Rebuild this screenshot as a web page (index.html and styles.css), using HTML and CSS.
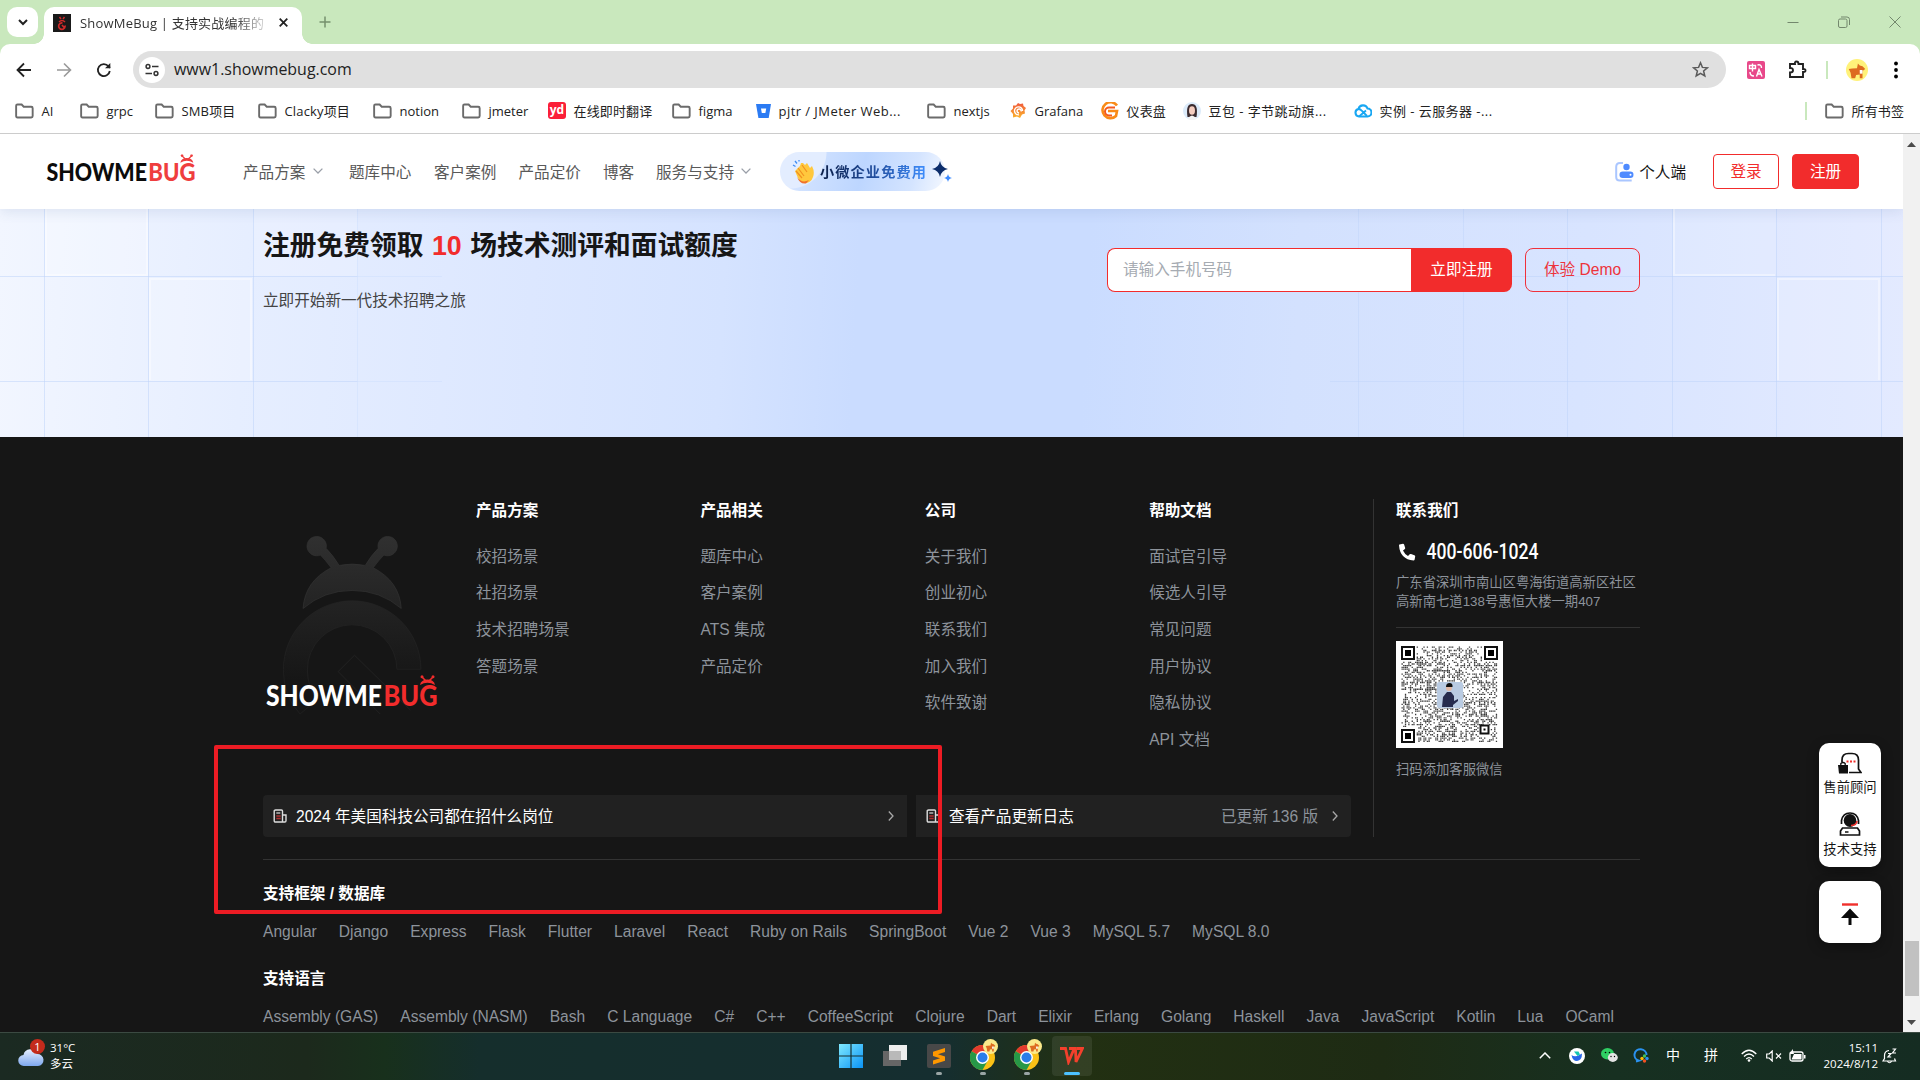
FILE: index.html
```html
<!DOCTYPE html>
<html lang="zh-CN">
<head>
<meta charset="utf-8">
<title>ShowMeBug</title>
<link rel="stylesheet" href="styles.css">
</head>
<body>
<svg class="defs" width="0" height="0" aria-hidden="true">
  <defs>
    <linearGradient id="bugFill" x1="0" y1="0" x2="0" y2="1"><stop offset="0" stop-color="#303030"/><stop offset="1" stop-color="#232323"/></linearGradient>
    <linearGradient id="ringFill" x1="0" y1="0" x2="0" y2="1"><stop offset="0" stop-color="#232323"/><stop offset=".7" stop-color="#161616"/></linearGradient>
    <linearGradient id="cloudFill" x1="0" y1="0" x2="0" y2="1"><stop offset="0" stop-color="#e6efff"/><stop offset="1" stop-color="#7da7ee"/></linearGradient>
    <linearGradient id="winFill" x1="0" y1="0" x2="1" y2="1"><stop offset="0" stop-color="#7fe9ff"/><stop offset="1" stop-color="#0a93f5"/></linearGradient>
    <linearGradient id="graf" x1="0" y1="0" x2="0" y2="1"><stop offset="0" stop-color="#f05a3c"/><stop offset="1" stop-color="#fbb32b"/></linearGradient>
    <symbol id="folder" viewBox="0 0 20 16"><path d="M1.2 2.6Q1.2 1.2 2.6 1.2H7l2.2 2.3h7.9q1.5 0 1.5 1.5v8.3q0 1.5-1.5 1.5H2.6q-1.4 0-1.4-1.5z" fill="none" stroke="#6b6b6b" stroke-width="2"/></symbol>
    <symbol id="down" viewBox="0 0 10 6"><path d="M.6.6 5 5 9.400.6" fill="none" stroke="#9a9fa8" stroke-width="1.3"/></symbol>
    <symbol id="next" viewBox="0 0 6 10"><path d="M.8.5 5 5 .8 9.500" fill="none" stroke="#a8a8a8" stroke-width="1.3"/></symbol>
    <symbol id="doc" viewBox="0 0 15 14"><path d="M2.500 1h6q1 0 1 1v11h-7q-1.300 0-1.300-1.300V2.200Q1.200 1 2.500 1zM9.500 6h3.500v5.800Q13 13 11.800 13H9" fill="none" stroke="#ddd" stroke-width="1.4"/><path d="M3.300 4h4" stroke="#ddd" stroke-width="1.200"/><path d="M3.300 7h4.400M3.300 9.500h4.400" stroke="#b13030" stroke-width="1.500"/></symbol>
    <symbol id="corgi" viewBox="0 0 24 24"><path d="M3 11q3-1 9-1l1-5 2 2 3 1 3 3-3 2v8h-3v-4l-4 .5-1 3.500H6L5 15z" fill="#dd6b20"/><path d="M15 12h3v4h-3z" fill="#fff"/></symbol>
    <symbol id="chrome" viewBox="0 0 24 24"><circle cx="12" cy="12" r="12" fill="#fbc116"/><path d="M12 12 1.600 6A12 12 0 0 1 22.400 6z" fill="#e33b2e"/><path d="M12 12 1.600 6A12 12 0 0 0 12 24l5-9z" fill="#279847"/><path d="M12 6h10.400L17 15z" fill="#fbc116"/><circle cx="12" cy="12" r="6.200" fill="#fff"/><circle cx="12" cy="12" r="4.800" fill="#2b7de9"/></symbol>
    <symbol id="star4" viewBox="0 0 10 10"><path d="M5 0Q5.800 4.200 10 5 5.800 5.800 5 10 4.200 5.800 0 5 4.200 4.200 5 0z"/></symbol>
    <symbol id="head" viewBox="0 0 18 11"><path d="M3.500 2l4 4M14.500 2l-4 4" stroke="currentColor" stroke-width="1.600"/><circle cx="3.500" cy="1.700" r="1.500" fill="currentColor"/><circle cx="14.500" cy="1.700" r="1.500" fill="currentColor"/><path d="M1.500 10Q2.500 4.500 9 4.500t7.500 5.500Q9 5.500 1.500 10z" fill="currentColor"/></symbol>
  </defs>
</svg>

<div class="tabstrip">
  <div class="tab-search"><svg width="10" height="7" viewBox="0 0 10 7"><path d="M1 1l4 4 4-4" fill="none" stroke="#222" stroke-width="2"/></svg></div>
  <div class="tab">
    <svg class="favicon" width="18" height="18" viewBox="0 0 18 18"><rect width="18" height="18" fill="#191919"/><path d="M6.500 3 8 5M11.500 3 10 5M6 8q3-3 6 0" fill="none" stroke="#cf2a2a" stroke-width="1.500"/><path d="M12 11.500A3.200 3.200 0 1 1 9.500 9M9 11l3 3.500" fill="none" stroke="#cf2a2a" stroke-width="1.700"/></svg>
    <span class="tab-title">ShowMeBug | 支持实战编程的</span>
    <svg width="9" height="9" viewBox="0 0 9 9"><path d="M.7.700l7.600 7.600M8.300.700.700 8.300" stroke="#222" stroke-width="1.800"/></svg>
  </div>
  <svg class="tab-add" width="12" height="12" viewBox="0 0 12 12"><path d="M6 .5v11M.5 6h11" stroke="#76906e" stroke-width="1.500"/></svg>
  <div class="win-ctl">
    <svg width="12" height="12" viewBox="0 0 12 12"><path d="M.5 6.500h11" stroke="#73876d"/></svg>
    <svg width="12" height="12" viewBox="0 0 12 12"><rect x=".5" y="3" width="8.500" height="8.500" rx="1.500" fill="none" stroke="#73876d"/><path d="M3 1h6q2.500 0 2.500 2.500V9" fill="none" stroke="#73876d"/></svg>
    <svg width="12" height="12" viewBox="0 0 12 12"><path d="M.5.500l11 11M11.500.500l-11 11" stroke="#73876d"/></svg>
  </div>
</div>

<div class="toolbar-wrap">
<div class="toolbar">
  <svg width="16" height="16" viewBox="0 0 16 16"><path d="M15 8H2M8 1.500 1.500 8 8 14.500" fill="none" stroke="#222" stroke-width="1.800"/></svg>
  <svg width="16" height="16" viewBox="0 0 16 16"><path d="M1 8h13M8 1.500 14.500 8 8 14.500" fill="none" stroke="#999" stroke-width="1.600"/></svg>
  <svg width="16" height="16" viewBox="0 0 16 16"><path d="M13.800 9A6 6 0 1 1 12.500 4.200L14 5.800" fill="none" stroke="#222" stroke-width="1.800"/><path d="M14.300 1v5.300H9z" fill="#222"/></svg>
  <div class="omnibox">
    <span class="site-info"><svg width="14" height="14" viewBox="0 0 14 14"><circle cx="3" cy="3.500" r="1.900" fill="none" stroke="#333" stroke-width="1.500"/><circle cx="11" cy="10.500" r="1.900" fill="none" stroke="#333" stroke-width="1.500"/><path d="M7 3.500h6.500M.500 10.500H7" stroke="#333" stroke-width="1.600"/></svg></span>
    <span class="url">www1.showmebug.com</span>
    <svg class="bm-star" width="17" height="17" viewBox="0 0 17 17"><path d="M8.500 1.800 10.400 6.400 15.400 6.800 11.600 10 12.800 15 8.500 12.300 4.200 15 5.400 10 1.600 6.800 6.600 6.400z" fill="none" stroke="#5a5a5a" stroke-width="1.500"/></svg>
  </div>
  <div class="ext">
    <svg width="18" height="18" viewBox="0 0 18 18"><rect width="18" height="18" rx="2" fill="#e8488a"/><path d="M2.500 4.500h6v3h-6zM5.500 2.500v8M10.500 4q4-1 4 3M3 11q0 4 4 4M9.500 15.500l2.500-7 3 7M10.500 13h3.500" fill="none" stroke="#fff" stroke-width="1.400"/></svg>
    <svg width="19" height="19" viewBox="0 0 19 19"><path d="M2 4h5Q6.500 1.500 8.500 1.500T10.500 4H15v5q2.500-.3 2.500 1.500T15 12v5H2v-4.500Q5 12.500 5 10.200T2 8z" fill="none" stroke="#222" stroke-width="1.900"/></svg>
    <i class="sep"></i>
    <svg width="22" height="22" viewBox="0 0 24 24"><circle cx="12" cy="12" r="12" fill="#fff27a"/><use href="#corgi"/></svg>
    <svg width="4" height="18" viewBox="0 0 4 18"><circle cx="2" cy="2.500" r="1.900"/><circle cx="2" cy="9" r="1.900"/><circle cx="2" cy="15.500" r="1.900"/></svg>
  </div>
</div>

<div class="bookmarks">
  <a><svg class="f"><use href="#folder"/></svg>AI</a>
  <a><svg class="f"><use href="#folder"/></svg>grpc</a>
  <a class="cjk"><svg class="f"><use href="#folder"/></svg>SMB项目</a>
  <a class="cjk"><svg class="f"><use href="#folder"/></svg>Clacky项目</a>
  <a><svg class="f"><use href="#folder"/></svg>notion</a>
  <a><svg class="f"><use href="#folder"/></svg>jmeter</a>
  <a class="cjk"><span class="yd">yd</span>在线即时翻译</a>
  <a><svg class="f"><use href="#folder"/></svg>figma</a>
  <a class="long"><svg width="15" height="14" viewBox="0 0 15 14"><path d="M0 0h15l-2.300 14H2.400z" fill="#2b7bf3"/><path d="M5 4.500h5.200L9.400 9H5.800z" fill="#fff"/></svg>pjtr / JMeter Web...</a>
  <a><svg class="f"><use href="#folder"/></svg>nextjs</a>
  <a><svg width="17" height="17" viewBox="0 0 17 17"><path d="M8 1l2 1 3-.5.500 2.500L16 6l-1.500 2.500.5 3-3 1L10 16l-3-1.500-4 1L3 12 .5 9 3 6.500 3 3.500l3 0z" fill="url(#graf)"/><path d="M12.500 9A4 4 0 1 0 9 12.800M11 9.500a2 2 0 1 0-2 1.500" fill="none" stroke="#fff" stroke-width="1.400"/></svg>Grafana</a>
  <a class="cjk"><svg width="19" height="18" viewBox="0 0 19 18"><path d="M17 3.500A8 8 0 1 0 16 14l1-5H8" fill="none" stroke="#f98b17" stroke-width="2.600"/><path d="M15 5.500H9a4 4 0 0 0 0 8h3" fill="none" stroke="#f4591d" stroke-width="2"/></svg>仪表盘</a>
  <a class="long"><svg width="18" height="18" viewBox="0 0 18 18"><circle cx="9" cy="9" r="9" fill="#dcebfa"/><path d="M4.500 15Q2.500 2 9 2t4.500 13z" fill="#3b2b2f"/><ellipse cx="9" cy="8.500" rx="3" ry="4.300" fill="#f5cdbf"/><path d="M4.500 17q4.500-7 9 0-4.500 2-9 0z" fill="#f4f4f4"/></svg>豆包 - 字节跳动旗...</a>
  <a class="long"><svg width="18" height="15" viewBox="0 0 18 15"><path d="M5 13.500a3.800 3.800 0 0 1-.5-7.500A4.700 4.700 0 0 1 13.500 5.500a4 4 0 0 1 0 8z" fill="none" stroke="#19a7f2" stroke-width="2.100"/><path d="M4.500 6q2 0 3.500 2l5 5M5 13.500l7-6" fill="none" stroke="#19a7f2" stroke-width="1.800"/></svg>实例 - 云服务器 -...</a>
  <i class="sep"></i>
  <a class="cjk"><svg class="f"><use href="#folder"/></svg>所有书签</a>
</div>
</div>

<div class="viewport">
<div class="page">
  <header class="nav">
    <svg class="logo" viewBox="0 0 171 30" color="#ef3e3e"><g font-family="Lato, sans-serif" font-weight="900" font-size="28"><text x="0" y="29.600" textLength="116" lengthAdjust="spacingAndGlyphs" fill="#0b0b0b">SHOWME</text><text x="117.500" y="29.600" textLength="54.500" lengthAdjust="spacingAndGlyphs" fill="#ef3e3e">BUG</text></g><use href="#head" x="153" y="-1" width="18" height="11"/></svg>
    <nav class="menu">
      <a>产品方案<svg class="chev"><use href="#down"/></svg></a><a>题库中心</a><a>客户案例</a><a>产品定价</a><a>博客</a><a>服务与支持<svg class="chev"><use href="#down"/></svg></a>
    </nav>
    <div class="pill">
      <svg width="22" height="25" viewBox="0 0 22 25"><path d="M1 6l2.500 1.500M3 2l2 2.500M7 1v1.500" stroke="#3f8cf5" stroke-width="1.300"/><path d="M3 12 8 7l1-3 2 0 2 2 2-2 3 5 2-2q3 6 1 11-2 6-8 6-4 0-7-5z" fill="#ffc83d"/><path d="M4 12l6 7M6 9l6 8M10 6l5 7" stroke="#f19020" stroke-width="1.200"/><path d="M5 18q5 7 12 3l-3 3.500q-6 1-9-6.500z" fill="#f0702c"/></svg>
      <b>小微企业免费用</b>
      <svg class="spark big" fill="#0c2d6b"><use href="#star4"/></svg>
      <svg class="spark small" fill="#3d8bff"><use href="#star4"/></svg>
    </div>
    <div class="account">
      <svg width="19" height="20" viewBox="0 0 19 20"><path d="M8 1H5Q1.200 1 1.200 5v10q0 3.500 3.500 3.500h12" fill="none" stroke="#aac6ff" stroke-width="2"/><circle cx="11.500" cy="5" r="3.200" fill="#4f8bff"/><rect x="4.500" y="9.500" width="14" height="6.500" rx="3.200" fill="#4f8bff"/><circle cx="15.500" cy="12.800" r="1" fill="#fff"/></svg>
      <span>个人端</span>
      <a class="btn ghost">登录</a><a class="btn solid">注册</a>
    </div>
  </header>

  <section class="banner">
    <svg class="tiles" width="1903" height="228" viewBox="0 0 1903 228">
      <g fill="#fff"><rect x="45" width="103" height="67" fill-opacity=".25"/><rect x="253" width="104" height="67" fill-opacity=".15"/><rect x="149" y="69" width="103" height="103" fill-opacity=".22"/><rect x="1672" width="104" height="67" fill-opacity=".12"/><rect x="1777" y="69" width="103" height="103" fill-opacity=".16"/><rect x="1776" width="127" height="67" fill-opacity=".08"/></g>
      <g fill="none" stroke="#fff" stroke-opacity=".4" stroke-width="2"><path d="M46 0v66h101V0M150 171V70h101v101M1674 0v66h101M1778 171V70h101v101"/></g>
      <g stroke="#bcd2fa" stroke-opacity=".5"><path d="M44.500 0v228M148.500 0v228M253.500 0v228M0 67.500h357M0 172.500h357"/><path d="M357.500 0v228M357 67.500h85M357 172.500h85" stroke-opacity=".25"/><path d="M1567.500 0v228M1672.500 0v228M1776.500 0v228M1881.500 0v228M1480 67.500h423M1480 172.500h423"/><path d="M1358.500 0v228M1463.500 0v228M1330 172.500h150M1330 67.500h150" stroke-opacity=".4"/></g>
    </svg>
    <div class="pitch">
      <h2>注册免费领取 <em>10</em> 场技术测评和面试额度</h2>
      <p>立即开始新一代技术招聘之旅</p>
    </div>
    <div class="signup">
      <span class="field">请输入手机号码</span><a class="go">立即注册</a><a class="demo">体验 Demo</a>
    </div>
  </section>

  <footer class="footer">
    <div class="top">
      <div class="main">
        <div class="cols">
          <div class="brand">
            <svg class="bug" viewBox="249 190 416 545"><path d="M250 600A206 206 0 0 1 662 598H590A134 134 0 0 0 322 600Q322 650 350 690L300 732Q250 680 250 600z" fill="url(#ringFill)" stroke="#242424" stroke-width="2"/><path d="M393 294Q375 270 361 256A29 29 0 1 1 378 236Q398 256 417 287Q456 279 495 287Q514 256 534 236A29 29 0 1 1 551 256Q537 270 519 294Q598 335 603 416Q540 362 456 362T309 416Q314 335 393 294z" fill="url(#bugFill)" stroke="#343434" stroke-width="2"/><path d="M540 732 414 605 463 556 630 720" fill="none" stroke="#242424" stroke-width="2.500"/></svg>
            <svg class="logo-foot" viewBox="0 0 171 30" color="#f22c2c"><g font-family="Lato, sans-serif" font-weight="900" font-size="28"><text x="0" y="29.600" textLength="116" lengthAdjust="spacingAndGlyphs" fill="#fff">SHOWME</text><text x="117.500" y="29.600" textLength="54" lengthAdjust="spacingAndGlyphs" fill="#f22c2c">BUG</text></g><use href="#head" x="152.500" y="-1" width="18" height="11"/></svg>
          </div>
          <div class="col"><h4>产品方案</h4><a>校招场景</a><a>社招场景</a><a>技术招聘场景</a><a>答题场景</a></div>
          <div class="col"><h4>产品相关</h4><a>题库中心</a><a>客户案例</a><a>ATS 集成</a><a>产品定价</a></div>
          <div class="col"><h4>公司</h4><a>关于我们</a><a>创业初心</a><a>联系我们</a><a>加入我们</a><a>软件致谢</a></div>
          <div class="col"><h4>帮助文档</h4><a>面试官引导</a><a>候选人引导</a><a>常见问题</a><a>用户协议</a><a>隐私协议</a><a>API 文档</a></div>
        </div>
        <div class="bars">
          <div class="bar wide"><svg class="doc"><use href="#doc"/></svg><span>2024 年美国科技公司都在招什么岗位</span><svg class="next"><use href="#next"/></svg></div>
          <div class="bar"><svg class="doc"><use href="#doc"/></svg><span>查看产品更新日志</span><small>已更新 136 版</small><svg class="next"><use href="#next"/></svg></div>
        </div>
      </div>
      <div class="contact">
        <h4>联系我们</h4>
        <div class="phone"><svg width="18" height="18" viewBox="0 0 18 18"><path d="M1.500 1.500 5 .8q.8 0 1.100.8L7.200 5q0 .8-.6 1.200L5 7.500q1.500 3.500 5 5.500l1.700-1.800q.6-.5 1.300-.2l3.400 1.200q.9.300.8 1.200l-.6 3.400q-.3.700-1 .7Q2 16.500 1 2.300q0-.6.500-.8z" fill="#fff"/></svg><svg class="tel" width="116" height="22" viewBox="0 0 116 22"><text x=".5" y="17.800" textLength="112" lengthAdjust="spacingAndGlyphs" font-family="Roboto, sans-serif" font-weight="500" font-size="22.500" fill="#fff">400-606-1024</text></svg></div>
        <p class="addr">广东省深圳市南山区粤海街道高新区社区<br>高新南七道138号惠恒大楼一期407</p>
        <svg class="qr" id="qr" width="107" height="107" viewBox="0 0 107 107"></svg>
        <p class="qr-note">扫码添加客服微信</p>
      </div>
    </div>
    <div class="tech">
      <h4>支持框架 / 数据库</h4>
      <div class="tags fw"><a>Angular</a><a>Django</a><a>Express</a><a>Flask</a><a>Flutter</a><a>Laravel</a><a>React</a><a>Ruby on Rails</a><a>SpringBoot</a><a>Vue 2</a><a>Vue 3</a><a>MySQL 5.7</a><a>MySQL 8.0</a></div>
      <h4>支持语言</h4>
      <div class="tags"><a>Assembly (GAS)</a><a>Assembly (NASM)</a><a>Bash</a><a>C Language</a><a>C#</a><a>C++</a><a>CoffeeScript</a><a>Clojure</a><a>Dart</a><a>Elixir</a><a>Erlang</a><a>Golang</a><a>Haskell</a><a>Java</a><a>JavaScript</a><a>Kotlin</a><a>Lua</a><a>OCaml</a></div>
    </div>
  </footer>

  <aside class="float">
    <div class="fcard">
      <svg width="24" height="22" viewBox="0 0 24 22"><path d="M4 10V8q0-6.500 6.500-6.500h3.500q6.500 0 6.500 6.500v9l2.500 3.500H11" fill="none" stroke="#111" stroke-width="1.700"/><path d="M8.500 9.500h2M12 9.500h2M15.500 9.500h2" stroke="#f0302c" stroke-width="2"/><path d="M0 13h10v8.500H1z" fill="#111"/><path d="M2.800 14v-2.500q2.200-2 4.400 0V14" fill="none" stroke="#111" stroke-width="1.300"/></svg>
      <span>售前顾问</span>
      <svg width="22" height="24" viewBox="0 0 22 24"><path d="M2.500 12V8.500Q4 1 11 1t8.500 7.500V12" fill="none" stroke="#111" stroke-width="1.700"/><ellipse cx="11" cy="8.500" rx="6.300" ry="6.500" fill="#111"/><path d="M18 9q-.5 4.500-6 4.500" fill="none" stroke="#f0302c" stroke-width="1.600"/><path d="M3.500 16h15l2 3v4H1.500v-4z" fill="none" stroke="#111" stroke-width="1.700"/><path d="M6 20h3.500" stroke="#111" stroke-width="1.500"/></svg>
      <span>技术支持</span>
    </div>
    <div class="fcard up"><svg width="18" height="22" viewBox="0 0 18 22"><path d="M1 1.500h16" stroke="#f0302c" stroke-width="2.400"/><path d="M9 5.500 18 15h-7.500v7h-3v-7H0z" fill="#0a0a0a"/></svg></div>
  </aside>
  <div class="marker"></div>
</div>
<div class="scroll"><svg width="9" height="5" viewBox="0 0 9 5"><path d="M4.500 0 9 5H0z" fill="#4a4a4a"/></svg><i class="thumb"></i><svg width="9" height="5" viewBox="0 0 9 5"><path d="M4.500 5 9 0H0z" fill="#4a4a4a"/></svg></div>
</div>

<div class="taskbar">
  <div class="weather">
    <svg width="30" height="28" viewBox="0 0 30 28"><path d="M6 27a5.500 5.500 0 0 1-.5-11A7 7 0 0 1 19 15a6 6 0 0 1 1 12z" fill="url(#cloudFill)"/><circle cx="19.500" cy="7.500" r="7.500" fill="#c42b1c"/><text x="19.500" y="11.500" text-anchor="middle" font-family="Open Sans, sans-serif" font-size="11" fill="#fff">1</text></svg>
    <span>31°C<br>多云</span>
  </div>
  <div class="apps">
    <div class="app"><svg width="24" height="24" viewBox="0 0 24 24"><path d="M0 0h11.400v11.400H0zM12.600 0H24v11.400H12.600zM0 12.600h11.400V24H0zM12.600 12.600H24V24H12.600z" fill="url(#winFill)"/></svg></div>
    <div class="app"><svg width="24" height="24" viewBox="0 0 24 24"><rect x="0" y="7" width="18" height="15" fill="#666"/><rect x="6" y="1" width="18" height="15" fill="#eee"/><path d="M6 7h12v9H6z" fill="#b9b9b9"/></svg></div>
    <div class="app run"><svg width="24" height="24" viewBox="0 0 24 24"><rect width="24" height="24" rx="2" fill="#484848"/><path d="M18 4v4l-7 2.200 7 2.300v4.300L6 20.500v-4l7-2.200-7-2.300V7.700z" fill="#ff9800"/></svg></div>
    <div class="app run"><svg width="30" height="34" viewBox="-2 0 30 34"><use href="#chrome" x="0" y="6" width="25" height="25"/><circle cx="20.500" cy="7.500" r="7.500" fill="#fbe98a"/><use href="#corgi" x="14" y="1" width="13" height="13"/></svg></div>
    <div class="app run"><svg width="30" height="34" viewBox="-2 0 30 34"><use href="#chrome" x="0" y="6" width="25" height="25"/><circle cx="20.500" cy="7.500" r="7.500" fill="#fbe98a"/><use href="#corgi" x="14" y="1" width="13" height="13"/></svg></div>
    <div class="app active"><svg width="24" height="18" viewBox="0 0 24 18"><path d="M0 1.500h5.500L8.500 15 14 2M9 1.500h6.500L16 15 22.500 1.500H17" fill="none" stroke="#f4402c" stroke-width="2.800"/></svg></div>
  </div>
  <div class="tray">
    <svg width="12" height="7" viewBox="0 0 12 7"><path d="M.8 6.200 6 1l5.200 5.200" fill="none" stroke="#fff" stroke-width="1.500"/></svg>
    <svg width="16" height="16" viewBox="0 0 16 16"><circle cx="8" cy="8" r="8" fill="#fff"/><path d="M2.500 7q4 3 10.500-1.500Q13 12.500 8 13 3.500 13 2.500 7z" fill="#2867e8"/><path d="M5 3.500h4.500L11 6.500 8.500 8z" fill="#13c6b2"/></svg>
    <svg width="17" height="15" viewBox="0 0 17 15"><ellipse cx="6.500" cy="5.800" rx="6.500" ry="5.700" fill="#2fcf63"/><ellipse cx="11.800" cy="9.500" rx="5" ry="4.400" fill="#e4e4e4"/><circle cx="4.500" cy="4.500" r=".8"/><circle cx="8.500" cy="4.500" r=".8"/><circle cx="10" cy="8.500" r=".7"/><circle cx="13.500" cy="8.500" r=".7"/></svg>
    <svg width="16" height="15" viewBox="0 0 16 15"><path d="M13.500 7A6 5.800 0 1 0 6 12.600L3 13.500" fill="none" stroke="#2a92f0" stroke-width="2"/><circle cx="11.500" cy="8" r="1.700" fill="#40c057"/><circle cx="14" cy="10.500" r="1.700" fill="#2a92f0"/><circle cx="11.500" cy="13" r="1.700" fill="#f25022"/><circle cx="9" cy="10.500" r="1.700" fill="#ffb900"/></svg>
    <b>中</b><b>拼</b>
    <svg width="16" height="13" viewBox="0 0 16 13"><path d="M.7 5Q8-2.500 15.300 5M3 7.500q5-5 10 0M5.300 10q2.700-2.700 5.400 0" fill="none" stroke="#fff" stroke-width="1.300"/><circle cx="8" cy="11.500" r="1.300" fill="#fff"/></svg>
    <svg width="16" height="12" viewBox="0 0 16 12"><path d="M.7 4h2.500l3-3v10l-3-3H.7zM10 3.500l5 5M15 3.500l-5 5" fill="none" stroke="#fff" stroke-width="1.200"/></svg>
    <svg width="17" height="14" viewBox="0 0 17 14"><rect x="1" y="3" width="13" height="9" rx="2" fill="none" stroke="#fff" stroke-width="1.300"/><path d="M5 5h7.500v5.500h-10zM15 6h1.500v3.500H15z" fill="#fff"/><path d="M3.500 0 1 5h4z" fill="#fff"/></svg>
    <time>15:11<br>2024/8/12</time>
    <svg width="16" height="16" viewBox="0 0 16 16"><path d="M7 2.500Q2.500 3 2.500 7.500v3L1 13h12.500l-1-2.500M5.500 13.500q2 2.500 4 0" fill="none" stroke="#fff" stroke-width="1.200"/><path d="M6 5.500h3L6 9h3.200M10.500 1h3l-3 4H14" fill="none" stroke="#fff" stroke-width="1.200"/></svg>
  </div>
</div>
<script src="script.js"></script>
</body>
</html>
```
FILE: styles.css
```css
* { box-sizing: border-box; }
body { margin: 0; width: 1920px; height: 1080px; overflow: hidden; display: flex; flex-direction: column; background: #161616; font-family: "Liberation Sans", "Noto Sans CJK SC", sans-serif; font-size: 15.6px; }
h2, h4, p { margin: 0; }
svg { display: block; flex: none; }
a, span, b, small { white-space: nowrap; }
.defs { position: absolute; }

.tabstrip { height: 44px; flex: none; display: flex; align-items: flex-start; background: #c9e8bd; padding: 7px 19px 0 7px; font-family: "Open Sans", "Noto Sans CJK SC", sans-serif; }
.tab-search { width: 31px; height: 30px; background: #fff; border-radius: 10px; display: grid; place-items: center; margin-right: 6px; }
.tab { width: 258px; height: 37px; border-radius: 10px 10px 0 0; background: #fff; display: flex; align-items: center; padding: 0 0 6px 9px; position: relative; }
.tab::before, .tab::after { content: ""; position: absolute; bottom: 0; width: 10px; height: 10px; }
.tab::before { left: -10px; background: radial-gradient(circle at 0 0, transparent 9.500px, #fff 10px); }
.tab::after { right: -10px; background: radial-gradient(circle at 100% 0, transparent 9.500px, #fff 10px); }
.tab-title { width: 186px; margin: 0 13px 0 9px; overflow: hidden; font-size: 13px; line-height: 20px; color: #333; letter-spacing: .2px; -webkit-mask: linear-gradient(90deg, #000 155px, transparent 192px); mask: linear-gradient(90deg, #000 155px, transparent 192px); }
.tab-add { margin: 9px 0 0 17px; }
.win-ctl { margin-left: auto; display: flex; gap: 39px; padding-top: 9px; }

.toolbar-wrap { height: 90px; flex: none; border-bottom: 1px solid #ccc; background: linear-gradient(#fff, #fff) 0 10px no-repeat, linear-gradient(#c9e8bd, #c9e8bd); font-family: "Open Sans", "Noto Sans CJK SC", sans-serif; }
.toolbar { height: 51px; background: #fff; border-radius: 10px 10px 0 0; display: flex; align-items: center; padding: 0 22px 0 16px; gap: 24px; }
.omnibox { width: 1593px; flex: none; height: 37px; margin-left: -3px; border-radius: 19px; background: #e0e0e0; display: flex; align-items: center; padding: 0 17px 0 6px; }
.site-info { width: 26px; height: 26px; border-radius: 50%; background: #fff; display: grid; place-items: center; }
.url { margin: -2px 0 0 9px; font-size: 15.950px; color: #222; }
.bm-star { margin-left: auto; }
.ext { display: flex; align-items: center; margin-left: -3px; }
.ext > :nth-child(2) { margin-left: 23px; }
.ext > :nth-child(3) { margin-left: 19px; }
.ext > :nth-child(4) { margin-left: 18px; }
.ext > :nth-child(5) { margin-left: 26px; }
.sep { width: 2px; height: 18px; background: #c9e8bd; }
.bookmarks { height: 31px; padding-left: 15px; display: grid; align-items: center; grid-template-columns: 65px 75px 103px 115px 89px 86px 124px 84px 171px 83px 90px 83px 171px 451px 20px auto; font-size: 13px; color: #222; }
.bookmarks a { display: flex; align-items: center; gap: 7.500px; }
.bookmarks .cjk { letter-spacing: .15px; }
.bookmarks .long { letter-spacing: .45px; }
.bookmarks .f { width: 19px; height: 16px; }
.yd { width: 18px; height: 17px; border-radius: 3px; background: #fb1f38; color: #fff; font-weight: 700; font-size: 12px; line-height: 15px; text-align: center; }

.viewport { height: 898px; flex: none; display: flex; }
.page { width: 1903px; height: 898px; overflow: hidden; position: relative; }
.nav { height: 75px; background: #fff; display: flex; align-items: center; padding: 0 44px 0 46px; position: relative; z-index: 2; box-shadow: 0 3px 12px rgba(60, 90, 140, .12); }
.logo { width: 149px; height: 26px; margin-top: -8px; overflow: visible; }
.menu { display: grid; grid-template-columns: 106px 85px 84.500px 84.500px 53px 124px; margin: -2px 0 0 48px; color: #595959; }
.menu a { display: flex; align-items: center; }
.chev { width: 10px; height: 6px; margin-left: 7.500px; }
.pill { width: 165px; height: 39px; border-radius: 20px; position: relative; display: flex; align-items: center; padding-left: 12px; background: radial-gradient(circle at 10px 0, #e3edff 36px, transparent 37px), linear-gradient(105deg, #dbe8ff, #bdd6ff 50%, #d4e4ff 80%, #f4f8ff); }
.pill b { margin: -2px 0 0 6px; font-size: 14.200px; letter-spacing: 1.100px; background: linear-gradient(90deg, #0b1e48, #204c9c 50%, #3f8fff); -webkit-background-clip: text; background-clip: text; color: transparent; }
.spark { position: absolute; }
.spark.big { width: 16px; height: 18px; left: 152px; top: 8px; }
.spark.small { width: 8px; height: 8px; left: 164px; top: 22px; }
.account { margin-left: auto; display: flex; align-items: center; color: #161616; }
.account span { margin: -2px 27px 0 5px; }
.btn { height: 35px; border-radius: 4px; line-height: 33px; text-align: center; border: 1px solid #f22c2c; }
.ghost { width: 66px; color: #f22c2c; margin-right: 13px; }
.solid { width: 67px; background: #f22c2c; color: #fff; }

.banner { height: 228px; position: relative; display: flex; justify-content: space-between; padding: 0 263px; background: linear-gradient(93deg, #f2f6ff 0, #e6eeff 13%, #dce7ff 28%, #d5e3ff 38%, #cadcff 45%, #cadcff 57%, #d3e1fe 68%, #d8e4ff 83%, #e3eaff 100%); }
.tiles { position: absolute; inset: 0; }
.pitch, .signup { position: relative; }
.pitch h2 { margin-top: 17px; font-size: 26.750px; line-height: 40px; color: #161616; white-space: nowrap; }
.pitch em { font-style: normal; color: #f22c2c; padding: 0 1px; }
.pitch p { margin-top: 23px; line-height: 24px; color: #444; }
.signup { display: flex; margin-top: 39px; height: 44px; line-height: 42px; }
.field { width: 304px; background: #fff; border: 1px solid #f22c2c; border-right: 0; border-radius: 8px 0 0 8px; padding-left: 15px; color: #a6abb2; }
.go { width: 101px; background: #f22c2c; color: #fff; border-radius: 0 8px 8px 0; text-align: center; line-height: 44px; margin-right: 13px; }
.demo { width: 115px; border: 1px solid #f0303a; border-radius: 8px; color: #ed333b; text-align: center; }

.footer { height: 595px; padding: 62px 263px 0; background: #161616; color: #8d939b; }
.footer h4 { color: #fff; line-height: 24px; }
.top { display: flex; height: 361px; border-bottom: 1px solid #333; }
.main { width: 1111px; height: 338px; padding-right: 22px; border-right: 1px solid #333; }
.cols { height: 296px; display: grid; grid-template-columns: 213px repeat(4, 224.400px); }
.brand { padding: 34px 0 0 20px; }
.bug { width: 139px; height: 182px; }
.logo-foot { width: 171px; height: 30px; margin: -39px 0 0 -17px; position: relative; overflow: visible; }
.col h4 { margin-bottom: 15.500px; }
.col a { display: block; line-height: 36.700px; }
.bars { display: grid; grid-template-columns: 644px 435px; gap: 9px; }
.bar { height: 42px; background: #212121; border-radius: 0 4px 4px 0; display: flex; align-items: center; padding: 0 13px 0 10px; color: #fff; }
.bar span, .bar small { margin-top: -2px; }
.bar.wide { border-radius: 4px 0 0 4px; }
.doc { width: 15px; height: 14px; margin-right: 8px; }
.bar small { margin-left: auto; font-size: 15.600px; color: #8d939b; margin-right: 14px; }
.next { width: 6px; height: 10px; }
.wide .next { margin-left: auto; }
.contact { width: 266px; padding-left: 22px; }
.phone { display: flex; align-items: center; gap: 10px; padding: 18px 0 0 2px; }
.addr { margin-top: 10px; font-size: 13.330px; line-height: 19px; padding-bottom: 16px; border-bottom: 1px solid #333; white-space: nowrap; }
.qr { margin-top: 13px; }
.qr-note { margin-top: 12px; font-size: 13.330px; line-height: 20px; }
.tech h4 { padding-top: 22px; }
.tech h4 + .tags { margin-top: 14px; }
.tags { display: flex; gap: 22.020px; line-height: 24px; }
.fw + h4 { padding-top: 23px; }

.float { position: absolute; left: 1819px; top: 609px; width: 62px; display: flex; flex-direction: column; gap: 14px; }
.fcard { height: 124px; border-radius: 10px; background: #fff; display: flex; flex-direction: column; align-items: center; padding-top: 9px; font-size: 13.330px; line-height: 18px; color: #161616; box-shadow: 0 4px 12px rgba(0, 0, 0, .35); }
.fcard span { margin: 5px 0 15px; }
.fcard.up { height: 62px; padding: 22px 0 0; }
.marker { position: absolute; left: 214px; top: 611px; width: 728px; height: 169px; border: 4px solid #ed1c24; border-radius: 2px; }
.scroll { width: 17px; background: #f1f1f1; display: flex; flex-direction: column; align-items: center; padding: 8px 0 7px; }
.thumb { width: 14px; height: 55px; background: #c1c1c1; margin: 794px 0 auto; }

.taskbar { height: 48px; flex: none; position: relative; border-top: 1px solid #3b4a42; background: linear-gradient(90deg, #1b2a22 0, #1c291c 16%, #18301c 20%, #152e2c 25%, #152e30 49%, #223012 56%, #1e2b14 72%, #173021 84%, #152c22 100%); color: #fff; display: grid; grid-template-columns: 830.500px 698.500px 1fr; align-items: center; padding-bottom: 2px; font: 12px/16px "Open Sans", "Noto Sans CJK SC", sans-serif; }
.weather { display: flex; align-items: center; padding-left: 18px; }
.weather svg { margin-top: -6px; }
.weather span { margin-left: 2px; font-size: 11.500px; }
.apps { display: flex; gap: 4px; }
.app { width: 40px; height: 40px; margin: 0 .1px; border-radius: 4px; display: grid; place-items: center; position: relative; }
.run::after, .active::after { content: ""; position: absolute; bottom: 1px; width: 6px; height: 3px; border-radius: 2px; background: #9aa5a5; }
.active { background: rgba(255, 255, 255, .08); }
.active::after { width: 16px; background: #4cc2ff; }
.tray { display: grid; grid-template-columns: 32px 32px 32px 32px 32px 44px 32px 17px 30px 67px 22px; align-items: center; justify-items: center; }
.tray b { font-size: 14px; font-weight: 400; margin-top: -2px; }
.tray time { justify-self: end; text-align: right; font-size: 11.500px; margin-right: 1px; }
```
FILE: script.js
```js
// Draws the customer-service QR code as an SVG grid.
(function () {
  var n = 57, m = 96 / n, seed = 20240812, d = '';
  function rnd() { seed = (seed * 1103515245 + 12345) % 2147483648; return seed / 2147483648; }
  for (var r = 0; r < n; r++) {
    for (var c = 0; c < n; c++) {
      var on = rnd() < 0.44;
      var corner = (r < 9 && (c < 9 || c > n - 10)) || (r > n - 10 && c < 9);
      var photo = r > 20 && r < 36 && c > 20 && c < 36;
      var align = r > 46 && r < 54 && c > 45 && c < 53;
      if (on && !corner && !photo && !align) {
        d += 'M' + (5.5 + c * m).toFixed(2) + ' ' + (5.5 + r * m).toFixed(2) + 'h1.3v1.3h-1.3z';
      }
    }
  }
  function finder(x, y) {
    return '<rect x="' + (x + 1) + '" y="' + (y + 1) + '" width="12" height="12" fill="#fff" stroke="#111" stroke-width="2"/>' +
      '<rect x="' + (x + 4) + '" y="' + (y + 4) + '" width="6" height="6" fill="#000"/>';
  }
  document.getElementById('qr').innerHTML =
    '<rect width="107" height="107" fill="#fff"/><path d="' + d + '" fill="#3a3a3a"/>' +
    finder(5, 5) + finder(88, 5) + finder(5, 88) +
    '<rect x="84.500" y="84.500" width="8" height="8" fill="#fff" stroke="#111" stroke-width="2"/><rect x="87.500" y="87.500" width="2" height="2"/>' +
    '<rect x="41" y="41" width="26" height="26" rx="2" fill="#b9cbe2"/>' +
    '<path d="M46 66 L47 56 L51 51 L55 51 L58 55 L58 60 L62 58 L62 60 L57 64 L57 66 Z" fill="#262b4d"/><circle cx="53" cy="47" r="3" fill="#e0b8a5"/><path d="M50 46q0-4 3.500-4t3 4z" fill="#111"/>';
})();
```
